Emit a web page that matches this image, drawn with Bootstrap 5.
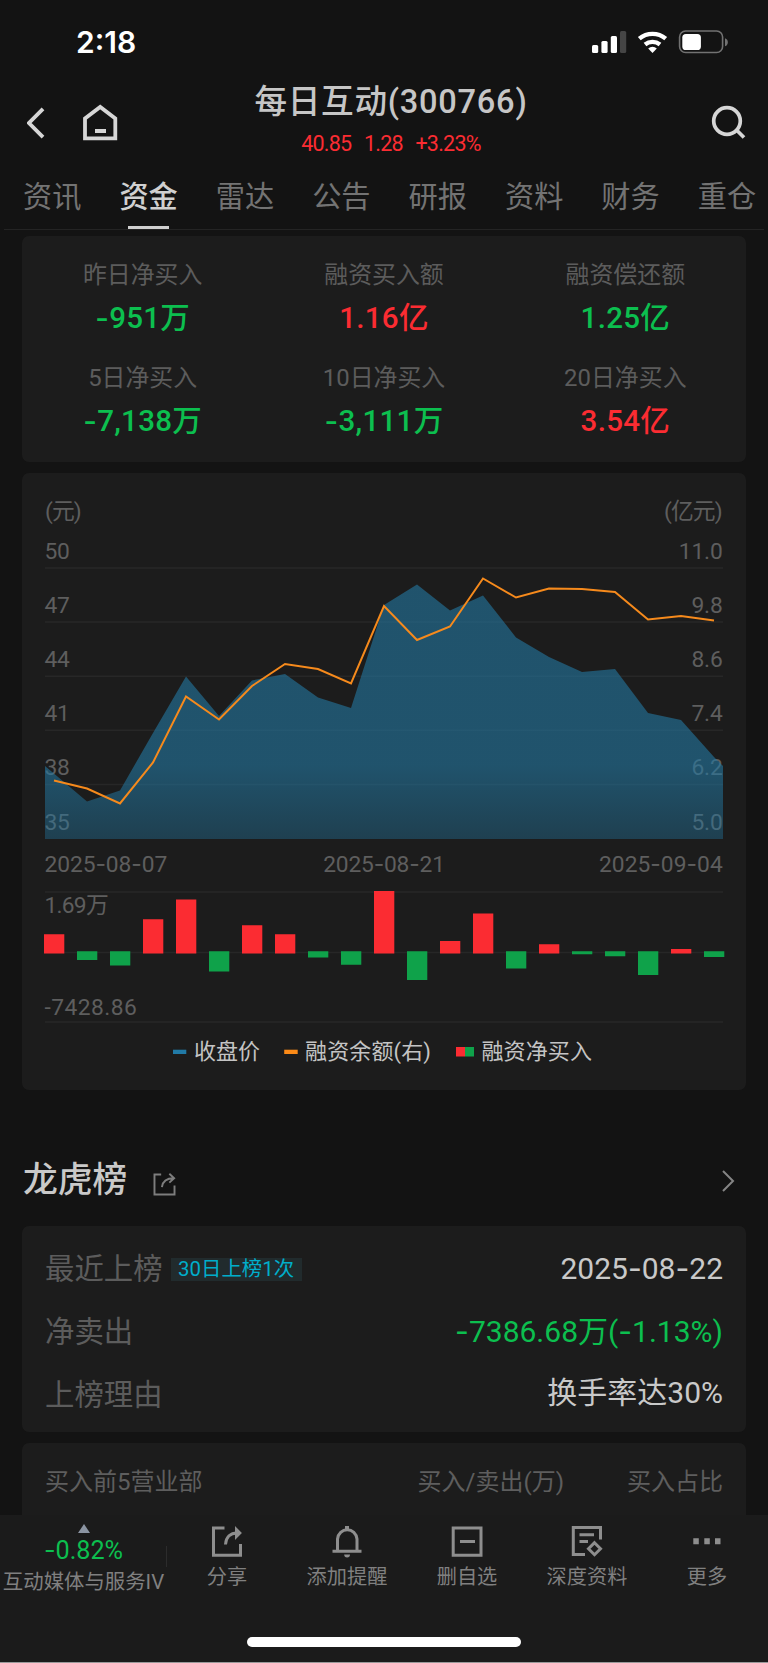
<!DOCTYPE html>
<html lang="zh-CN">
<head>
<meta charset="utf-8">
<meta name="viewport" content="width=device-width, initial-scale=1">
<title>每日互动(300766)</title>
<link rel="stylesheet" href="https://cdn.jsdelivr.net/npm/bootstrap@5.3.0/dist/css/bootstrap.min.css">
<style>
:root{--page:#131313;--panel:#1c1c1c;--dim:#5c5c5c;--mid:#7c7c7c;--bright:#c9c9c9;--up:#fb2c32;--down:#0cbf4f}
body{background:var(--page);color:var(--bright);font-family:Roboto,"Noto Sans CJK SC",sans-serif;line-height:1;height:1663px;overflow:hidden}
svg{display:block;flex:none}
.dash{font-family:Inter,sans-serif;font-style:normal}
.up{color:var(--up)}.down{color:var(--down)}.dim{color:var(--dim)}
.status{height:79px;padding:3px 39px 0 76px}
.clock{font:600 30px/1 Inter,sans-serif;color:#fff;padding-top:2px}
.topbar{height:88px;padding:0 22px 0 27px}
.identity{margin-left:-47px}
.stock-name{font-size:32.6px;letter-spacing:.75px;font-weight:500;color:#c6c6c6;height:46px}
.quote{font-size:21.5px;gap:12.5px;height:38px;letter-spacing:-.75px}
.tabs{height:63px;padding:0 0 0 23px;gap:38.6px;margin:0 4px 6px 0;background:linear-gradient(#242424,#242424) 4px 100%/100% 1px no-repeat;overflow:hidden}
.tabs a{font-size:29.2px;color:#737373;text-decoration:none;flex:none;height:63px;display:flex;align-items:center;position:relative;padding-bottom:2px;width:57.8px;white-space:nowrap}
.tabs a.active{color:#d0d0d0;font-weight:500}
.tabs a.active::after{content:"";position:absolute;left:9px;bottom:1px;width:41px;height:3px;background:#cfcfcf}
.panel{background:var(--panel);border-radius:7px;margin:0 22px}
.summary{height:226px;padding-top:19px}
.summary .k{font-size:23.9px;height:42px;color:var(--dim);display:flex;align-items:center;justify-content:center}
.summary .v{font-size:29.5px;font-weight:500;height:43px;display:flex;align-items:center;justify-content:center;letter-spacing:.3px}
.summary .col-4{height:103px}
.chart{height:617px;margin-top:11px}
.chart text{font-size:22.8px;fill:#5e5e5e;letter-spacing:-.2px}
.chart .lg{font-size:22px;fill:#c4c4c4;letter-spacing:0}
.section-title{height:136px;padding:71px 33px 0 23px}
.section-title h2{font-size:34.8px;font-weight:500;margin:0;line-height:1}
.lhb{height:206px;padding:12px 23px 0}
.lhb .line{height:63px;font-size:29.4px}
.lhb .val{font-size:30px;position:relative;top:-1px}
.tag{font-size:20.4px;color:#00aecb;background:#212b2d;height:23px;width:131px;margin-left:8px}
.broker{height:72px;padding:6px 23px 0;margin-top:11px;border-radius:7px 7px 0 0;font-size:24px;color:#5e5e5e}
.dock{height:148px;background:#1b1b1b;color:#808080;font-size:20.2px;border-bottom:1px solid #9a9a9a}
.dock .tool{width:120px;padding-top:9px}
.dock .tool span{margin-top:8px;height:22px;display:flex;align-items:center;white-space:nowrap}
.sector{width:167px;padding-top:9px}
.sector b{font-size:25.2px;font-weight:400;height:24px;margin-top:6px;display:flex;align-items:center}
.sector span{font-size:20.4px;margin-top:8px;white-space:nowrap;height:22px;display:flex;align-items:center}
.rule{width:1px;height:21px;background:#2c2c2c;margin:31px 0 0 -1px}
.home-bar{width:274px;height:10px;border-radius:5px;background:#fff;margin-top:7px}
</style>
</head>
<body class="d-flex flex-column">
<header>
  <div class="status d-flex align-items-center justify-content-between">
    <span class="clock">2:18</span>
    <svg width="138" height="26" viewBox="591 28 138 26">
      <g fill="#fff"><rect x="592" y="45" width="6.2" height="8" rx="1.5"/><rect x="601.4" y="41" width="6.2" height="12" rx="1.5"/><rect x="610.8" y="36" width="6.2" height="17" rx="1.5"/><rect x="620" y="31" width="6.2" height="22" rx="1.5" fill="#454545"/></g>
      <g fill="none" stroke="#fff" stroke-width="4.3"><path d="M639.3 38.7a20.5 20.5 0 0 1 26.4 0"/><path d="M645 44.5a12 12 0 0 1 15 0"/></g>
      <path d="M652.5 53l-4.3-4.6a6.6 6.6 0 0 1 8.6 0z" fill="#fff"/>
      <rect x="679.6" y="31" width="43" height="21.5" rx="6" fill="none" stroke="#727272" stroke-width="1.6"/>
      <rect x="682.3" y="34" width="18.6" height="16" rx="3.6" fill="#fff"/>
      <path d="M725 38.2c3.8 1.2 3.8 7 0 8z" fill="#727272"/>
    </svg>
  </div>
  <div class="topbar d-flex justify-content-between">
    <div class="d-flex pt-4">
      <svg width="92" height="40" viewBox="27 103 92 40" fill="none" stroke="#d6d6d6" stroke-width="3.8"><path d="M43 108.8L29 123L43 137.2"/><path d="M85 138.3V118.5L100.2 107L115.3 118.5V138.3Z"/><path d="M95 131H106" stroke-width="4"/></svg>
    </div>
    <div class="identity d-flex flex-column align-items-center">
      <div class="stock-name d-flex align-items-center">每日互动(300766)</div>
      <div class="quote d-flex align-items-center up"><span>40.85</span><span>1.28</span><span>+3.23%</span></div>
    </div>
    <div class="pt-4">
      <svg width="36" height="40" viewBox="710 103 36 40" fill="none" stroke="#d6d6d6" stroke-width="3.7"><circle cx="727" cy="121" r="13.3"/><path d="M736 129.5L744 137.5"/></svg>
    </div>
  </div>
  <nav class="tabs d-flex"><a href="#">资讯</a><a href="#" class="active">资金</a><a href="#">雷达</a><a href="#">公告</a><a href="#">研报</a><a href="#">资料</a><a href="#">财务</a><a href="#">重仓</a></nav>
</header>
<main>
  <section class="panel summary">
    <div class="row g-0 text-center">
      <div class="col-4"><div class="k">昨日净买入</div><div class="v down"><i class="dash">-</i>951万</div></div>
      <div class="col-4"><div class="k">融资买入额</div><div class="v up">1.16亿</div></div>
      <div class="col-4"><div class="k">融资偿还额</div><div class="v down">1.25亿</div></div>
      <div class="col-4"><div class="k">5日净买入</div><div class="v down"><i class="dash">-</i>7,138万</div></div>
      <div class="col-4"><div class="k">10日净买入</div><div class="v down"><i class="dash">-</i>3,111万</div></div>
      <div class="col-4"><div class="k">20日净买入</div><div class="v up">3.54亿</div></div>
    </div>
  </section>
  <section class="panel chart">
    <svg width="724" height="617" viewBox="22 473 724 617">
      <defs><linearGradient id="fade" gradientUnits="userSpaceOnUse" x1="0" y1="765" x2="0" y2="839"><stop offset="0" stop-color="#2378a2" stop-opacity=".6"/><stop offset="1" stop-color="#2378a2" stop-opacity=".39"/></linearGradient></defs>
      <path d="M45 568H723M45 622H723M45 676.2H723M45 730.3H723M45 784.5H723M45 892H723M45 952.5H723M45 1022H723" stroke="#272727" stroke-width="1.6"/>
      <g>
        <text x="45" y="519" textLength="36.5">(元)</text><text x="44.5" y="559">50</text><text x="44.5" y="613">47</text><text x="44.5" y="667.2">44</text><text x="44.5" y="721.3">41</text><text x="44.5" y="775.4">38</text><text x="44.5" y="829.5">35</text>
      </g>
      <g text-anchor="end">
        <text x="722.5" y="519" textLength="58.5">(亿元)</text><text x="722.5" y="559">11.0</text><text x="722.5" y="613">9.8</text><text x="722.5" y="667.2">8.6</text><text x="722.5" y="721.3">7.4</text><text x="722.5" y="775.4">6.2</text><text x="722.5" y="829.5">5.0</text>
      </g>
      <path fill="url(#fade)" d="M45 839V766L87 801.5L120 790.5L153 733L186 676.5L219 716L252 680.5L285 674L318 697.5L351 708L384 605L417 584.5L450 610.5L483 595.5L516 637.5L549 657L582 672L615 669L648 713L681 720L714 757L723 766V839Z"/>
      <polyline fill="none" stroke="#f68a1c" stroke-width="2" points="54,780.5 87,788.5 120,803.5 153,762.5 186,696.5 219,719.5 252,686 285,664 318,669 351,683.5 384,606 417,640 450,626.5 483,578.5 516,597.5 549,588.5 582,589 615,592 648,619.5 681,616 714,620.5"/>
      <text x="44.5" y="872" textLength="122.5">2025<tspan class="dash">-</tspan>08<tspan class="dash">-</tspan>07</text>
      <text x="384" y="872" text-anchor="middle" textLength="121.5">2025<tspan class="dash">-</tspan>08<tspan class="dash">-</tspan>21</text>
      <text x="722.5" y="872" text-anchor="end" textLength="123.5">2025<tspan class="dash">-</tspan>09<tspan class="dash">-</tspan>04</text>
      <text x="44.5" y="913" textLength="64">1.69万</text>
      <text x="44.5" y="1015" textLength="92">-7428.86</text>
      <path fill="#fb2c32" d="M44 934.3h20.3V953.5H44zM143 919.3h20.3V953.5H143zM176 899.5h20.3V953.5H176zM242 925.2h20.3V953.5H242zM275 934.2h20.3V953.5H275zM374 891h20.3V953.5H374zM440 941h20.3V953.5H440zM473 913.5h20.3V953.5H473zM539 944.3h20.3V953.5H539zM671 949h20.3V953.5H671z"/>
      <path fill="#0fa24a" d="M77 951.3h20.3V960H77zM110 951.3h20.3V965.4H110zM209 951.3h20.3V971.6H209zM308 951.3h20.3V957.6H308zM341 951.3h20.3V964.8H341zM407 951.3h20.3V980H407zM506 951.3h20.3V968.6H506zM572 951.3h20.3V954.3H572zM605 951.3h20.3V956.2H605zM638 951.3h20.3V975H638zM704 951.3h20.3V957H704z"/>
      <path fill="#217aa6" d="M173 1049.7h13.3v4.3H173z"/><path fill="#fb8a17" d="M284.2 1049.7h13.5v4.3h-13.5z"/>
      <path fill="#fb2c32" d="M456 1047h9v9.5h-9z"/><path fill="#0fa24a" d="M465 1047h9v9.5h-9z"/>
      <text class="lg" x="194" y="1059" textLength="66">收盘价</text><text class="lg" x="305" y="1059" textLength="126">融资余额(右)</text><text class="lg" x="481.5" y="1059" textLength="110.5">融资净买入</text>
    </svg>
  </section>
  <section>
    <div class="section-title d-flex align-items-start justify-content-between">
      <div class="d-flex"><h2 style="padding-top:2px">龙虎榜</h2>
        <svg style="margin:12px 0 0 26px" width="23" height="23" viewBox="0 0 31 31" fill="none" stroke="#7d7d7d" stroke-width="2.6"><path d="M11 2H2V29H29V17"/><path d="M12 19C13 11 19 7 28 7M22 1L28.5 7L22 13"/></svg></div>
      <svg style="margin-top:8px" width="14" height="24" viewBox="721 1169 14 24" fill="none" stroke="#858585" stroke-width="2"><path d="M723 1171L733 1181L723 1191"/></svg>
    </div>
    <div class="panel lhb">
      <div class="line d-flex align-items-center"><span class="dim">最近上榜</span><span class="tag d-flex align-items-center justify-content-center">30日上榜1次</span><span class="val ms-auto">2025<i class="dash">-</i>08<i class="dash">-</i>22</span></div>
      <div class="line d-flex align-items-center justify-content-between"><span class="dim">净卖出</span><span class="val down"><i class="dash">-</i>7386.68万(<i class="dash">-</i>1.13%)</span></div>
      <div class="line d-flex align-items-center justify-content-between"><span class="dim">上榜理由</span><span class="val pb-1">换手率达30%</span></div>
    </div>
    <div class="panel broker d-flex align-items-center"><span>买入前5营业部</span><span class="ms-auto">买入/卖出(万)</span><span style="margin-left:63px">买入占比</span></div>
  </section>
</main>
<footer class="dock">
  <div class="d-flex" style="height:115px">
    <div class="sector d-flex flex-column align-items-center">
      <svg width="12" height="9" viewBox="0 0 12 9"><path d="M0 9L6 0L12 9Z" fill="#8b94a2"/></svg>
      <b class="down"><i class="dash">-</i>0.82%</b><span>互动媒体与服务IV</span>
    </div>
    <div class="rule"></div>
    <div class="tool d-flex flex-column align-items-center"><svg width="32" height="34" viewBox="0 0 32 34" fill="none" stroke="#8e8e8e" stroke-width="3"><path d="M13.5 4H2.5V31.3H29.5V20"/><path d="M14.5 20.5C15 13 19.5 9 26 9"/><path d="M25 4.5L29.5 9L25 13.5Z" fill="#8e8e8e" stroke-width="2"/></svg><span>分享</span></div>
    <div class="tool d-flex flex-column align-items-center"><svg width="32" height="34" viewBox="0 0 32 34" fill="none" stroke="#8e8e8e" stroke-width="3"><path d="M6.5 27V15A9.8 10.3 0 0 1 26 15V27M1.5 27.3H30.5"/><path d="M16 2V5" stroke-width="4"/><path d="M13.2 30.5H19A2.9 3 0 0 1 13.2 30.5Z" fill="#8e8e8e" stroke="none"/></svg><span>添加提醒</span></div>
    <div class="tool d-flex flex-column align-items-center"><svg width="32" height="34" viewBox="0 0 32 34" fill="none" stroke="#8e8e8e" stroke-width="3"><path d="M2.2 4H30V31.3H2.2ZM9 17.5H24"/></svg><span>删自选</span></div>
    <div class="tool d-flex flex-column align-items-center"><svg width="32" height="34" viewBox="0 0 32 34" fill="none" stroke="#8e8e8e" stroke-width="3"><path d="M29.5 15.5V3.5H2.3V30.5H14M8.5 10.7H23M8.5 17.5H17"/><path d="M23.5 18.7L29.5 24.7L23.5 30.7L17.5 24.7Z"/></svg><span>深度资料</span></div>
    <div class="tool d-flex flex-column align-items-center"><svg width="32" height="34" viewBox="0 0 32 34" fill="#8e8e8e"><path d="M2.3 14.3h5.5v6H2.3zM13.3 14.3h5.5v6h-5.5zM24 14.3h5.5v6H24z"/></svg><span>更多</span></div>
  </div>
  <div class="home-bar mx-auto"></div>
</footer>
</body>
</html>
